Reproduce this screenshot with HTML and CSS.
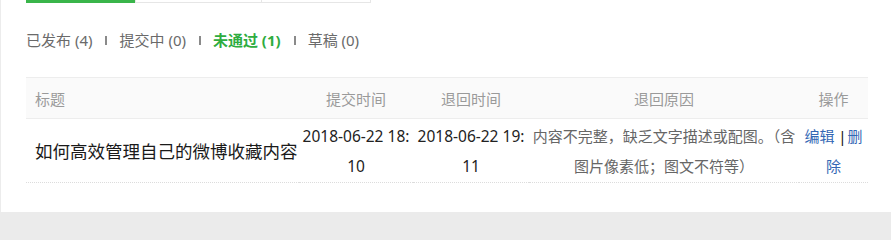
FILE: index.html
```html
<!DOCTYPE html>
<html lang="zh-CN">
<head>
<meta charset="utf-8">
<title>未通过</title>
<link rel="stylesheet" href="styles.css">
</head>
<body>
<div class="card">
  <div class="tabs">
    <div class="tab tab-active"></div>
    <div class="tab tab-2"></div>
    <div class="tab tab-3"></div>
  </div>
  <div class="filters">
    <span class="filter">已发布 (4)</span>
    <span class="sep"></span>
    <span class="filter">提交中 (0)</span>
    <span class="sep"></span>
    <span class="filter filter-active">未通过 (1)</span>
    <span class="sep"></span>
    <span class="filter">草稿 (0)</span>
  </div>
  <table class="list">
    <colgroup>
      <col class="c-title">
      <col class="c-sub">
      <col class="c-ret">
      <col class="c-reason">
      <col class="c-op">
    </colgroup>
    <thead>
      <tr>
        <th class="th-title">标题</th>
        <th>提交时间</th>
        <th>退回时间</th>
        <th>退回原因</th>
        <th>操作</th>
      </tr>
    </thead>
    <tbody>
      <tr>
        <td class="td-title">如何高效管理自己的微博收藏内容</td>
        <td class="td-date"><span class="dl">2018-06-22 18:</span><span class="dl">10</span></td>
        <td class="td-date"><span class="dl">2018-06-22 19:</span><span class="dl">11</span></td>
        <td class="td-reason">内容不完整，缺乏文字描述或配图。（含图片像素低；图文不符等）</td>
        <td class="td-op"><a class="op" href="#">编辑</a> <span class="bar">|</span><a class="op" href="#">删除</a></td>
      </tr>
    </tbody>
  </table>
</div>
</body>
</html>
```
FILE: styles.css
```css
html, body {
  margin: 0;
  padding: 0;
}
body {
  background: #ebebeb;
  font-family: "Noto Sans", "Noto Sans CJK SC", sans-serif;
  width: 891px;
  height: 217px;
  overflow: hidden;
}
.card {
  background: #fff;
  border-left: 1px solid #ececec;
  height: 212px;
  box-sizing: border-box;
  padding: 0 24px 0 25px;
}
.tabs {
  display: flex;
  height: 3px;
}
.tab {
  height: 3px;
  box-sizing: border-box;
}
.tab-active {
  width: 109px;
  background: #39b54a;
}
.tab-2 {
  width: 127px;
  border: 1px solid #e6e6e6;
  border-top: none;
}
.tab-3 {
  width: 109px;
  border: 1px solid #e6e6e6;
  border-top: none;
  border-left: none;
}
.filters {
  display: flex;
  align-items: center;
  margin-top: 27px;
  height: 20px;
  font-size: 15px;
  line-height: 20px;
  color: #6a6a6a;
}
.filter-active {
  color: #2eac3f;
  font-weight: bold;
}
.sep {
  display: inline-block;
  width: 2px;
  height: 9px;
  background: #8a8a8a;
  margin: 1px 12px 0 13px;
}
.list {
  margin-top: 27px;
  width: 842px;
  table-layout: fixed;
  border-collapse: collapse;
}
.c-title { width: 273px; }
.c-sub { width: 114px; }
.c-ret { width: 116px; }
.c-reason { width: 270px; }
.c-op { width: 69px; }
.list th {
  background: #fafafa;
  border-top: 1px solid #ededed;
  border-bottom: 1px solid #ededed;
  height: 40px;
  padding: 0;
  font-size: 15px;
  font-weight: normal;
  color: #9a9a9a;
  text-align: center;
}
.list th.th-title {
  text-align: left;
  padding-left: 9px;
}
.list td {
  padding: 2px 0 1px;
  line-height: 30px;
  text-align: center;
  vertical-align: middle;
  border-bottom: 1px dotted #dcdcdc;
}
.list td.td-title {
  text-align: left;
  padding-left: 9px;
  font-size: 17.5px;
  color: #1a1a1a;
  white-space: nowrap;
}
.td-date {
  font-size: 15.5px;
  color: #222;
}
.dl {
  display: block;
  white-space: nowrap;
}
.td-reason {
  font-size: 15px;
  color: #666;
}
.list td.td-op {
  font-size: 15px;
  padding-left: 4px;
  padding-right: 4px;
}
.op {
  color: #3467b4;
  text-decoration: none;
}
.bar {
  color: #111;
  margin-right: 1px;
}
```
